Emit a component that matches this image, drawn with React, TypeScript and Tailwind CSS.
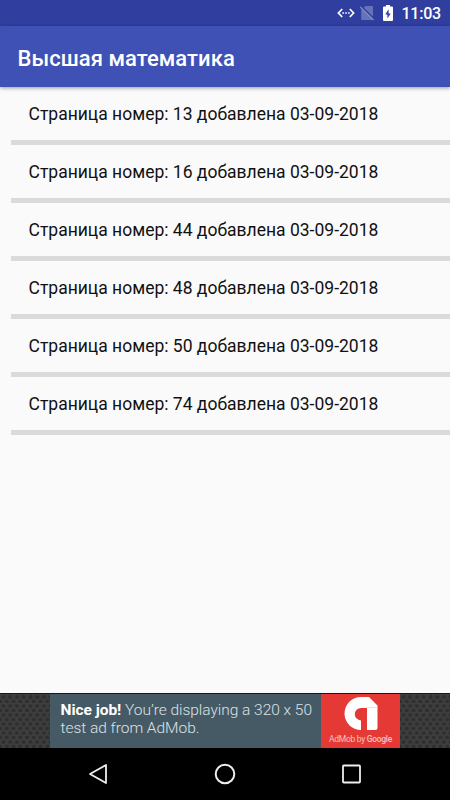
const PAGES = [13, 16, 44, 48, 50, 74];
const ADDED_ON = "03-09-2018";

function StatusBar() {
  return (
    <div className="flex h-[26px] shrink-0 items-center justify-end bg-[#303f9f] pr-[9px] text-white">
      <svg width="18" height="12" viewBox="0 0 18 12" fill="none" stroke="currentColor" strokeWidth="1.7">
        <path d="M5.2 2L1.4 6L5.2 10M12.8 2L16.6 6L12.8 10" />
        <path d="M5.3 6h1.6M8.2 6h1.6M11.1 6h1.6" />
      </svg>
      <svg className="ml-[4px] text-[#6772b8]" width="16" height="16" viewBox="0 0 16 16">
        <path d="M6.5 1H13a1 1 0 0 1 1 1v13H3.2a1 1 0 0 1-1-1V5z" fill="currentColor" />
        <path d="M2.5 1.6L15.5 14" stroke="#303f9f" strokeWidth="1.5" />
        <path d="M1.2 2L14.4 15" stroke="#7f89c6" strokeWidth="1.3" />
      </svg>
      <svg className="ml-[7px]" width="12" height="18" viewBox="0 0 12 18">
        <path d="M4 1h4v1.6h2a1 1 0 0 1 1 1V16a1 1 0 0 1-1 1H2a1 1 0 0 1-1-1V3.6a1 1 0 0 1 1-1h2z" fill="currentColor" />
        <path d="M6.6 5.3L3.3 10.4h2.1v4.2l3.3-5.2H6.6z" fill="#303f9f" />
      </svg>
      <span className="ml-[7px] pt-[2px] text-[16px] leading-none font-medium tracking-[-0.2px]">11:03</span>
    </div>
  );
}

function PageRow({ page }: { page: number }) {
  return (
    <li>
      <div className="flex h-[53px] items-center pt-[2px] pl-[28.5px] text-[17.5px] whitespace-nowrap text-[#111111]">
        Страница номер: {page} добавлена {ADDED_ON}
      </div>
      <div className="ml-[11px] h-[5px] bg-[#dadada]" />
    </li>
  );
}

function Mesh({ id }: { id: string }) {
  return (
    <svg className="h-full w-[50px] shrink-0" width="50" height="54">
      <defs>
        <pattern id={id} width="6.75" height="9" patternUnits="userSpaceOnUse">
          <rect width="6.75" height="9" fill="#3e3e3e" />
          <circle cx="3.375" cy="3" r="2.1" fill="#2f2f2f" />
          <circle cx="0" cy="7.5" r="2.1" fill="#2f2f2f" />
          <circle cx="6.75" cy="7.5" r="2.1" fill="#2f2f2f" />
        </pattern>
      </defs>
      <rect width="50" height="54" fill={`url(#${id})`} />
    </svg>
  );
}

function AdBanner() {
  return (
    <div className="flex h-[55px] shrink-0 border-t border-[#101820] bg-[#333333]">
      <Mesh id="mesh-left" />
      <div className="w-[271px] shrink-0 bg-[#465a65] pt-[7px] pl-[10.5px] text-[15.5px] leading-[18px] font-light tracking-[-0.03px] whitespace-nowrap text-[#dce2e5]">
        <div><b className="font-bold text-white">Nice job!</b> You’re displaying a 320 x 50</div>
        <div>test ad from AdMob.</div>
      </div>
      <div className="flex w-[79px] shrink-0 flex-col items-center bg-[#e53935] pt-[3px]">
        <svg width="34" height="34" viewBox="0 0 34 34">
          <path d="M17 0h8l8.5 8.5v22.5a2 2 0 0 1-2 2H23V11H17a6.2 6.2 0 0 0 0 12.4V33A16.5 16.5 0 0 1 17 0z" fill="white" />
          <path d="M23 10.5h10.5" stroke="#dddddd" strokeWidth="0.8" />
        </svg>
        <span className="mt-[3px] text-[8.5px] leading-[10px] tracking-[-0.3px] whitespace-nowrap text-[#f8c2c0]">
          AdMob by <span className="font-medium">Google</span>
        </span>
      </div>
      <Mesh id="mesh-right" />
    </div>
  );
}

function NavBar() {
  return (
    <div className="flex h-[52px] shrink-0 items-center justify-between bg-black px-[87px] text-[#eeeeee]">
      <svg width="22" height="24" viewBox="0 0 22 24" fill="none" stroke="currentColor" strokeWidth="1.8" strokeLinejoin="round">
        <path d="M19 3v18L3 12z" />
      </svg>
      <svg width="24" height="24" viewBox="0 0 24 24" fill="none" stroke="currentColor" strokeWidth="2">
        <circle cx="12" cy="12" r="9.3" />
      </svg>
      <svg width="22" height="24" viewBox="0 0 22 24" fill="none" stroke="currentColor" strokeWidth="1.8">
        <rect x="2" y="3.5" width="17" height="17" rx="0.8" />
      </svg>
    </div>
  );
}

export default function App() {
  return (
    <div className="flex h-[800px] w-[450px] flex-col overflow-hidden bg-[#fafafa] font-['Roboto','Noto_Sans',sans-serif]">
      <StatusBar />
      <header className="z-10 flex h-[61px] shrink-0 items-center bg-[#3f51b5] pt-[3px] pl-[17.5px] shadow-[0_1px_4px_rgba(0,0,0,0.4)]">
        <h1 className="text-[22px] font-medium tracking-[0.05px] whitespace-nowrap text-white">Высшая математика</h1>
      </header>
      <ul className="flex-1">
        {PAGES.map((page) => (
          <PageRow key={page} page={page} />
        ))}
      </ul>
      <AdBanner />
      <NavBar />
    </div>
  );
}
